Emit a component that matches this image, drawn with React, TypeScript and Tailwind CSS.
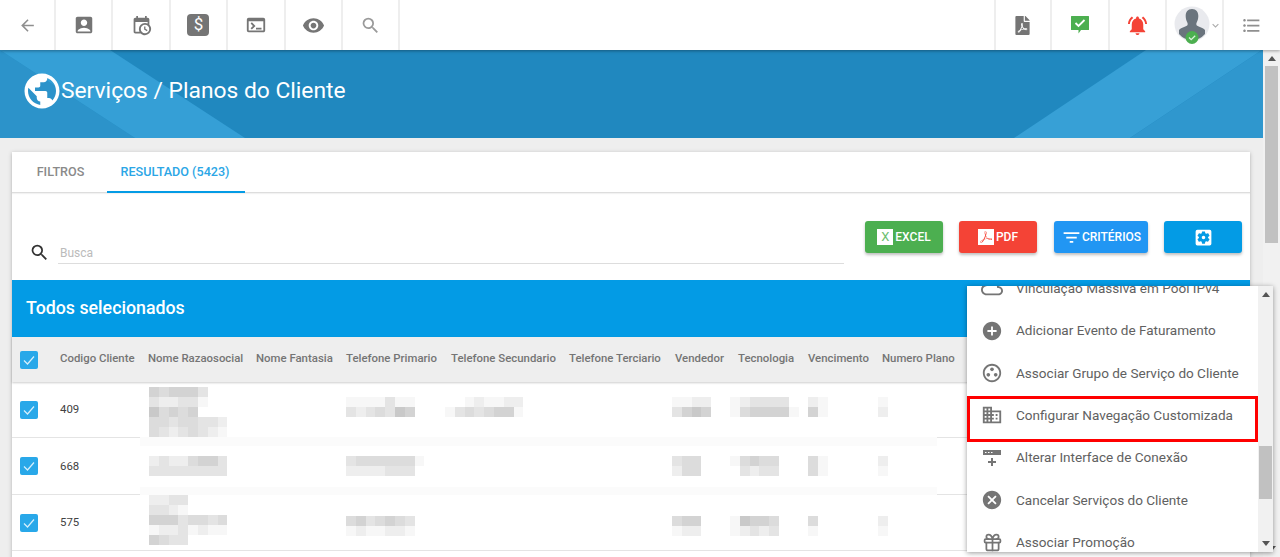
import type { ReactNode } from "react";
import {
  MdAccountBox,
  MdAddCircle,
  MdArrowBack,
  MdCancel,
  MdExpandMore,
  MdFilterList,
  MdFormatListBulleted,
  MdNotificationsActive,
  MdOutlineCloud,
  MdOutlineDomain,
  MdOutlineGroupWork,
  MdOutlineTerminal,
  MdPublic,
  MdSearch,
  MdSettingsApplications,
  MdVisibility,
} from "react-icons/md";
import { FaFilePdf } from "react-icons/fa";
import { LuGift } from "react-icons/lu";
import { SiAdobeacrobatreader } from "react-icons/si";

const shades: Record<string, string> = {
  a: "bg-[#c9c9c9]",
  b: "bg-[#d3d3d3]",
  c: "bg-[#dcdcdc]",
  d: "bg-[#e4e4e4]",
  e: "bg-[#eeeeee]",
  f: "bg-[#f7f7f7]",
  ".": "bg-transparent",
};

// pixelated (censored) cell contents, one letter per 10px block
function Blur({ rows, className }: { rows: string[]; className: string }) {
  return (
    <div className={`relative flex flex-col self-start ${className}`}>
      {rows.map((row, i) => (
        <div key={i} className="flex">
          {row.split("").map((c, j) => (
            <div key={j} className={`h-[10px] w-[9.8px] ${shades[c]}`} />
          ))}
        </div>
      ))}
    </div>
  );
}

function Check({ className }: { className: string }) {
  return (
    <div className={`flex h-[18px] w-[18px] items-center justify-center rounded-[2px] bg-[#29a8e9] ${className}`}>
      <svg viewBox="0 0 18 18" className="h-[18px] w-[18px]" fill="none" stroke="#d5effc" strokeWidth="1.2">
        <path d="M4 9.5 7.5 13 14 5.5" />
      </svg>
    </div>
  );
}

function TopCell({ children, width = "w-[57.4px]", className = "" }: { children: ReactNode; width?: string; className?: string }) {
  return (
    <div className={`flex h-full items-center justify-center border-r-2 border-[#eeeeee] text-[#757575] ${width} ${className}`}>
      {children}
    </div>
  );
}

function CalendarClock() {
  return (
    <svg viewBox="0 0 24 24" className="h-[21px] w-[21px]" fill="currentColor">
      <path d="M15,13H16.5V15.82L18.94,17.23L18.19,18.53L15,16.69V13M19,8H5V19H9.67C9.24,18.09 9,17.07 9,16A7,7 0 0,1 16,9C17.07,9 18.09,9.24 19,9.67V8M5,21C3.89,21 3,20.1 3,19V5C3,3.89 3.89,3 5,3H6V1H8V3H16V1H18V3H19A2,2 0 0,1 21,5V11.1C22.24,12.36 23,14.09 23,16A7,7 0 0,1 16,23C14.09,23 12.36,22.24 11.1,21H5M16,11.15A4.85,4.85 0 0,0 11.15,16C11.15,18.68 13.32,20.85 16,20.85A4.85,4.85 0 0,0 20.85,16C20.85,13.32 18.68,11.15 16,11.15Z" />
    </svg>
  );
}

function Avatar() {
  return (
    <svg viewBox="0 0 36 40" className="h-[40px] w-[36px]">
      <circle cx="18" cy="19" r="17.5" fill="#e9eaee" />
      <path d="M18 4c4.5 0 6.5 3.4 6.3 7.6-.1 2.4-.7 4.2-1.5 5.7-.6 1.1-.7 2.4 0 3.2 2.2 1.7 6.4 2 8.2 4.6V29a17 17 0 0 1-26 0v-3.900c1.800-2.600 6-2.900 8.200-4.600.7-.8.6-2.100 0-3.200-.8-1.500-1.400-3.300-1.500-5.700C11.500 7.400 13.500 4 18 4z" fill="#6a747d" />
      <circle cx="18" cy="32.5" r="6.5" fill="#4caf50" />
      <path d="M15 32.5l2.200 2.200 4-4" fill="none" stroke="#d9f2da" strokeWidth="1.3" />
    </svg>
  );
}

function TopBar() {
  return (
    <div className="relative z-10 flex h-[50px] shrink-0 items-stretch justify-between bg-white shadow-[0_1px_3px_rgba(0,0,0,0.35)]">
      <div className="flex">
        <TopCell width="w-[56px]">
          <MdArrowBack className="text-[19px] text-[#8f8f8f]" />
        </TopCell>
        <TopCell>
          <MdAccountBox className="text-[22px]" />
        </TopCell>
        <TopCell>
          <CalendarClock />
        </TopCell>
        <TopCell>
          <div className="flex h-[22px] w-[22px] items-center justify-center rounded-[4px] bg-[#757575] text-[17px] text-white">$</div>
        </TopCell>
        <TopCell>
          <MdOutlineTerminal className="text-[22px]" />
        </TopCell>
        <TopCell>
          <MdVisibility className="text-[23px]" />
        </TopCell>
        <TopCell>
          <MdSearch className="text-[21px] text-[#9a9a9a]" />
        </TopCell>
      </div>
      <div className="flex">
        <TopCell width="w-[58.5px]" className="border-l-2">
          <FaFilePdf className="text-[19px]" />
        </TopCell>
        <TopCell width="w-[57.5px]">
          <svg viewBox="0 0 20 20" className="h-[20px] w-[20px]">
            <path d="M1.5 1h17a.5.5 0 0 1 .5.5v13a.5.5 0 0 1-.5.5H11l-2.500 3.500V15h-7a.5.5 0 0 1-.5-.5v-13a.5.5 0 0 1 .5-.5z" fill="#4caf50" />
            <path d="M5.5 8l3 3 6-6" fill="none" stroke="#fff" strokeWidth="1.8" />
          </svg>
        </TopCell>
        <TopCell width="w-[57px]">
          <MdNotificationsActive className="text-[23px] text-[#f44336]" />
        </TopCell>
        <TopCell width="w-[57.5px]" className="justify-start pl-[7px]">
          <Avatar />
          <MdExpandMore className="ml-[-1px] text-[13px] text-[#aaaaaa]" />
        </TopCell>
        <div className="flex w-[56px] items-center justify-center pr-[2px]">
          <MdFormatListBulleted className="text-[21px] text-[#8f8f8f]" />
        </div>
      </div>
    </div>
  );
}

function Hero() {
  return (
    <div className="relative flex h-[88px] shrink-0 items-center overflow-hidden bg-[#2088bf] pb-[6px] pl-[21px]">
      <svg className="absolute inset-0 h-full w-full" viewBox="0 0 1263 88" preserveAspectRatio="none">
        <polygon points="0,0 135,88 0,88" fill="#2c93ca" />
        <polygon points="0,0 110,0 245,88 135,88" fill="#359fd6" />
        <polygon points="1146,0 1262,0 1130,88 1014,88" fill="#37a0d6" />
        <polygon points="1262,0 1263,0 1263,88 1130,88" fill="#2f97ce" />
      </svg>
      <div className="relative flex items-center">
        <MdPublic className="text-[42px] text-white" />
        <h1 className="ml-[-2px] text-[22.8px] leading-none text-white">Serviços / Planos do Cliente</h1>
      </div>
    </div>
  );
}

function Tabs() {
  return (
    <div className="flex h-[41px] items-stretch border-b border-[#dddddd] shadow-[0_1px_1px_rgba(0,0,0,0.05)]">
      <div className="flex w-[95px] items-center justify-center pl-[2px] pt-[1px] text-[12.6px] font-medium text-[#8a8a8a]">FILTROS</div>
      <div className="mb-[-1px] flex w-[138px] items-center justify-center border-b-2 border-[#039be5] pr-[2px] pt-[1px] text-[12.6px] font-medium text-[#2ba6e6]">
        RESULTADO (5423)
      </div>
    </div>
  );
}

function Toolbar() {
  return (
    <div className="flex h-[87px] items-start pl-[17px] pr-[8px]">
      <MdSearch className="mt-[49px] shrink-0 text-[21px] text-[#333333]" />
      <div className="ml-[8px] mt-[49px] h-[22px] w-[786px] border-b border-[#dddddd] pl-[2px] pt-[1px] text-[12px] leading-[20px] text-[#bbbbbb]">Busca</div>
      <div className="ml-[21px] mt-[28px] flex text-[12px] font-medium text-white">
        <button className="flex h-[32px] w-[78px] items-center justify-center rounded-[3px] bg-[#4caf50] shadow-[0_2px_3px_rgba(0,0,0,0.25)]">
          <span className="mr-[2px] flex h-[16px] w-[16px] items-center justify-center bg-white text-[13px] font-normal text-[#6cc070]">X</span>
          EXCEL
        </button>
        <button className="ml-[16px] flex h-[32px] w-[78px] items-center justify-center rounded-[3px] bg-[#f44336] shadow-[0_2px_3px_rgba(0,0,0,0.25)]">
          <span className="mr-[2px] flex h-[16px] w-[16px] items-center justify-center bg-white">
            <SiAdobeacrobatreader className="text-[12px] text-[#f44336]" />
          </span>
          PDF
        </button>
        <button className="ml-[17px] flex h-[32px] w-[94px] items-center justify-center rounded-[3px] bg-[#2196f3] shadow-[0_2px_3px_rgba(0,0,0,0.25)]">
          <MdFilterList className="text-[21px]" />
          CRITÉRIOS
        </button>
        <button className="ml-[16px] flex h-[32px] w-[78px] items-center justify-center rounded-[3px] bg-[#039be5] shadow-[0_2px_3px_rgba(0,0,0,0.25)]">
          <MdSettingsApplications className="text-[21px]" />
        </button>
      </div>
    </div>
  );
}

const columns = [
  "Codigo Cliente",
  "Nome Razaosocial",
  "Nome Fantasia",
  "Telefone Primario",
  "Telefone Secundario",
  "Telefone Terciario",
  "Vendedor",
  "Tecnologia",
  "Vencimento",
  "Numero Plano",
];

const gridCols = "grid grid-cols-[40px_88px_108px_90px_105px_118px_106px_63px_70px_74px_1fr]";

const rows = [
  {
    code: "409",
    height: "h-[56px]",
    band: "top-[55px] h-[9px]",
    nameTop: "mt-[5px]",
    cellTop: "mt-[15px]",
    name: ["bcbbbd", "deeddf", "acbcb.", "ccdccdde", "cdedcdef"],
    tel: ["ffffdff", "dedcdab"],
    sec: ["..feffee", "fdcdcbbf"],
    vend: ["ffee..", "dbab"],
    tec: ["fedddd.", "fcbbbbf"],
    venc: ["ef", "bf"],
    num: ["f", "e"],
  },
  {
    code: "668",
    height: "h-[57px]",
    band: "top-[49px] h-[8px]",
    nameTop: "mt-[18px]",
    cellTop: "mt-[18px]",
    name: ["edeecbbd", "dddddddd"],
    tel: ["dccccccf", "eeeeddd"],
    sec: [],
    vend: ["dcc", "ecc"],
    tec: ["fcbcc", ".dedd"],
    venc: ["cf", "cf"],
    num: ["e", "f"],
  },
  {
    code: "575",
    height: "h-[56px]",
    band: "",
    nameTop: "mt-[0px]",
    cellTop: "mt-[21px]",
    name: ["eedd", "ddef", "bbbdccdc", "feedfeff", "bcdd"],
    tel: ["cbdcbcd", "feffeef"],
    sec: [],
    vend: ["cbb", "fee"],
    tec: ["fabbc", "feded"],
    venc: ["c.", "f."],
    num: ["e", "f"],
  },
];

function Table() {
  return (
    <div className="text-[11.4px]">
      <div className={`${gridCols} h-[45px] items-center bg-[#eeeeee] pl-[8px] font-medium text-[#757575] shadow-[0_1px_2px_rgba(0,0,0,0.2)]`}>
        <Check className="" />
        {columns.map((c) => (
          <div key={c} className="mb-[1px] whitespace-nowrap">
            {c}
          </div>
        ))}
      </div>
      {rows.map((r) => (
        <div key={r.code} className={`relative ${gridCols} ${r.height} border-b border-[#e4e4e4] pl-[8px] text-[#424242]`}>
          {r.band && <div className={`absolute left-[128px] w-[797px] bg-[#fbfbfb] ${r.band}`} />}
          <Check className="self-center" />
          <div className="self-center pt-[1px]">{r.code}</div>
          <Blur rows={r.name} className={`ml-[1px] ${r.nameTop}`} />
          <div />
          <Blur rows={r.tel} className={r.cellTop} />
          <Blur rows={r.sec} className={`ml-[-6px] ${r.cellTop}`} />
          <div />
          <Blur rows={r.vend} className={`ml-[-3px] ${r.cellTop}`} />
          <Blur rows={r.tec} className={`ml-[-8px] ${r.cellTop}`} />
          <Blur rows={r.venc} className={r.cellTop} />
          <Blur rows={r.num} className={`ml-[-4px] ${r.cellTop}`} />
        </div>
      ))}
    </div>
  );
}

function InterfaceIcon() {
  return (
    <svg viewBox="0 0 20 20" className="h-[20px] w-[20px]" fill="#757575">
      <path d="M1 2h18v5H1z" />
      <path d="M3 4h1.500v1H3zM6 4h1.500v1H6zM9 4h1.500v1H9z" fill="#fff" />
      <path d="M9 10h2v3h3v2h-3v3H9v-3H6v-2h3z" />
    </svg>
  );
}

const menuItems: { label: string; icon: ReactNode }[] = [
  { label: "Vinculação Massiva em Pool IPv4", icon: <MdOutlineCloud className="text-[22px]" /> },
  { label: "Adicionar Evento de Faturamento", icon: <MdAddCircle className="text-[22px]" /> },
  { label: "Associar Grupo de Serviço do Cliente", icon: <MdOutlineGroupWork className="text-[22px]" /> },
  { label: "Configurar Navegação Customizada", icon: <MdOutlineDomain className="text-[22px]" /> },
  { label: "Alterar Interface de Conexão", icon: <InterfaceIcon /> },
  { label: "Cancelar Serviços do Cliente", icon: <MdCancel className="text-[22px]" /> },
  { label: "Associar Promoção", icon: <LuGift className="text-[21px]" /> },
];

function ActionMenu() {
  return (
    <div className="absolute left-[967px] top-[286px] z-20 flex h-[266px] w-[306px] overflow-hidden bg-white shadow-[0_1px_5px_rgba(0,0,0,0.4)]">
      <div className="relative w-[291px] overflow-hidden">
        <div className="mt-[-18.8px]">
          {menuItems.map((m) => (
            <div key={m.label} className="flex h-[42.3px] items-center text-[13.55px] text-[#616161]">
              <div className="flex w-[49px] shrink-0 justify-center pl-[1px] text-[#757575]">{m.icon}</div>
              <span className="whitespace-nowrap">{m.label}</span>
            </div>
          ))}
        </div>
        <div className="absolute left-[0px] top-[110px] h-[46px] w-[291px] border-[3px] border-[#ff0000]" />
      </div>
      <Scrollbar width="w-[15px] px-[1px]" thumb="mt-[160px] h-[53px]" />
    </div>
  );
}

function Scrollbar({ width, thumb }: { width: string; thumb: string }) {
  return (
    <div className={`relative h-full shrink-0 bg-[#f1f1f1] ${width}`}>
      <svg viewBox="0 0 10 6" className="absolute left-1/2 top-[6px] h-[5px] w-[8px] -translate-x-1/2" fill="#555555">
        <path d="M5 0l5 6H0z" />
      </svg>
      <div className={`${thumb} w-full bg-[#c1c1c1]`} />
      <svg viewBox="0 0 10 6" className="absolute bottom-[6px] left-1/2 h-[5px] w-[8px] -translate-x-1/2" fill="#555555">
        <path d="M0 0h10L5 6z" />
      </svg>
    </div>
  );
}

export default function App() {
  return (
    <div className="relative flex h-[557px] w-[1280px] flex-col overflow-hidden bg-[#eeeeee] font-[Roboto,sans-serif]">
      <TopBar />
      <div className="flex min-h-0 flex-1">
        <div className="min-w-0 flex-1">
          <Hero />
          <div className="ml-[12px] mr-[13px] mt-[14px] h-[420px] bg-white shadow-[0_1px_4px_rgba(0,0,0,0.25)]">
            <Tabs />
            <Toolbar />
            <div className="flex h-[57px] items-center bg-[#039be5] pl-[14px] text-[17.8px] font-medium text-white">Todos selecionados</div>
            <Table />
          </div>
        </div>
        <Scrollbar width="w-[17px] px-[2px]" thumb="mt-[16px] h-[177px]" />
      </div>
      <ActionMenu />
    </div>
  );
}
